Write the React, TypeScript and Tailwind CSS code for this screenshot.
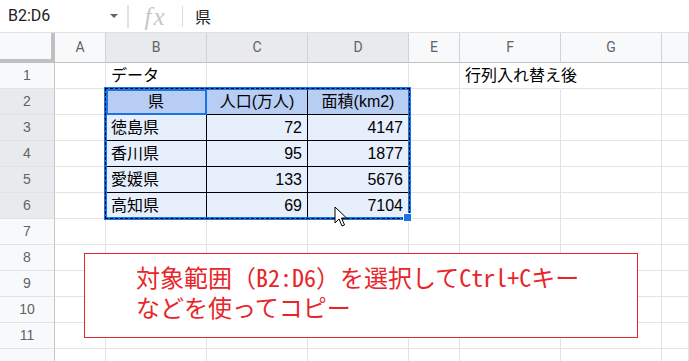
const COLS = ["", "A", "B", "C", "D", "E", "F", "G", ""];
const WIDTHS = ["w-[55px]", "w-[51px]", "w-[101px]", "w-[101px]", "w-[101px]", "w-[51px]", "w-[101px]", "w-[101px]", "flex-1"];

const DATA: Record<number, Record<number, string>> = {
  1: { 2: "データ", 6: "行列入れ替え後" },
  2: { 2: "県", 3: "人口(万人)", 4: "面積(km2)" },
  3: { 2: "徳島県", 3: "72", 4: "4147" },
  4: { 2: "香川県", 3: "95", 4: "1877" },
  5: { 2: "愛媛県", 3: "133", 4: "5676" },
  6: { 2: "高知県", 3: "69", 4: "7104" },
};

function cellClass(r: number, c: number) {
  const inTable = r >= 2 && r <= 6 && c >= 2 && c <= 4;
  const right = inTable || (c === 1 && r >= 2 && r <= 6) ? "border-r-black" : r === 1 && c === 6 ? "border-r-transparent" : "border-r-[#e2e3e3]";
  const bottom = inTable || (r === 1 && c >= 2 && c <= 4) ? "border-b-black" : "border-b-[#e2e3e3]";
  const bg = inTable && r === 2 ? "bg-[#b8cdf4]" : inTable ? "bg-[#e7effd]" : "";
  const align = r === 2 && inTable ? "justify-center" : c >= 3 && inTable ? "justify-end pr-[5px]" : "pl-[5px]";
  return `${WIDTHS[c]} ${right} ${bottom} ${bg} ${align}`;
}

function Row({ r }: { r: number }) {
  const hi = r >= 2 && r <= 6;
  return (
    <div className="flex h-[26px]">
      <div className={`${WIDTHS[0]} flex shrink-0 items-center justify-center border-r border-b border-r-[#c4c7c5] border-b-[#e2e3e3] text-[14px] text-[#5f6368] ${hi ? "bg-[#e8eaed]" : "bg-[#f8f9fa]"}`}>
        {r < 12 ? r : ""}
      </div>
      {[1, 2, 3, 4, 5, 6, 7, 8].map((c) => (
        <div key={c} className={`${cellClass(r, c)} flex shrink-0 items-center overflow-visible whitespace-nowrap border-r border-b text-[16px] text-black`}>
          {DATA[r]?.[c] ?? ""}
        </div>
      ))}
    </div>
  );
}

// half-width latin inside the gothic callout text
function Hw({ children }: { children: string }) {
  return <span className="[font-feature-settings:'hwid']">{children}</span>;
}

export default function App() {
  return (
    <div className="relative h-[361px] w-[689px] overflow-hidden bg-white font-['Roboto','Liberation_Sans','Noto_Sans_CJK_JP',sans-serif]">
      {/* formula bar */}
      <div className="flex h-[33px] items-center border-b border-[#e0e0e0] text-[#202124]">
        <div className="flex w-[127px] items-center justify-between pl-[8px] pr-[9px] text-[16px]">
          <span>B2:D6</span>
          <svg width="8" height="4" viewBox="0 0 8 4"><polygon points="0,0 8,0 4,4" fill="#5f6368" /></svg>
        </div>
        <div className="h-[23px] w-[2px] bg-[#e3e3e3]" />
        <div className="flex w-[53px] justify-center font-['Liberation_Serif',serif] text-[25px] italic leading-none tracking-[2px] text-[#c5c7c9]">fx</div>
        <div className="h-[21px] w-px bg-[#dadce0]" />
        <div className="pl-[12px] font-['Noto_Sans_CJK_JP',sans-serif] text-[16px]">県</div>
      </div>

      {/* column headers */}
      <div className="flex h-[30px]">
        <div className="w-[55px] shrink-0 border-r-4 border-b-4 border-[#c0c0c0] bg-[#f8f9fa]" />
        {COLS.slice(1).map((l, i) => {
          const c = i + 1;
          const hi = c >= 2 && c <= 4;
          return (
            <div key={c} className={`${WIDTHS[c]} flex shrink-0 items-center justify-center border-r border-b border-r-[#d0d2d4] border-b-[#c0c0c0] text-[14px] text-[#5f6368] ${hi ? "bg-[#e8eaed]" : "bg-[#f8f9fa]"}`}>
              {l}
            </div>
          );
        })}
      </div>

      <div className="font-['Liberation_Sans','Noto_Sans_CJK_JP',sans-serif]">
        {[1, 2, 3, 4, 5, 6, 7, 8, 9, 10, 11, 12].map((r) => (
          <Row key={r} r={r} />
        ))}
      </div>

      {/* copy range marching ants */}
      <div className="absolute left-[104px] top-[87px] h-[133px] w-[307px] border-[3px] border-[#1a73e8]">
        <div className="absolute inset-[-2px] border border-dashed border-black" />
      </div>
      <div className="absolute left-[106px] top-[89px] h-[26px] w-[101px] border-2 border-[#1a73e8]" />
      <div className="absolute left-[403px] top-[213px] h-[9px] w-[9px] border border-white bg-[#1a73e8]" />

      {/* mouse pointer */}
      <svg className="absolute left-[334px] top-[206px]" width="14" height="22" viewBox="0 0 14 22">
        <path d="M1 1 L1 17 L5 13 L8 20 L10.5 19 L7.5 12 L12.5 12 Z" fill="#fff" stroke="#000" strokeWidth="1" strokeLinejoin="round" />
      </svg>

      {/* callout */}
      <div className="absolute left-[84px] top-[253px] h-[85px] w-[554px] border border-[#e3262a] bg-white pl-[51px] pt-[8px] font-['Noto_Sans_CJK_JP',sans-serif] text-[24px] leading-[30px] text-[#e8262a]">
        <div className="whitespace-nowrap">対象範囲（<Hw>B2:D6</Hw>）を選択して<Hw>Ctrl+C</Hw>キー</div>
        <div className="whitespace-nowrap">などを使ってコピー</div>
      </div>
    </div>
  );
}
